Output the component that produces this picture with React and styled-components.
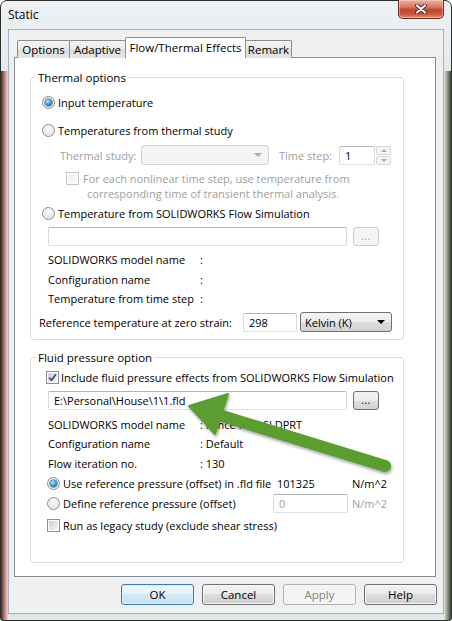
import React from 'react';
import styled, { createGlobalStyle, css } from 'styled-components';

const GlobalStyle = createGlobalStyle`
  html, body { margin: 0; padding: 0; }
  body {
    width: 452px; height: 621px; overflow: hidden; background: #ffffff;
    font-family: "Open Sans", "Liberation Sans", sans-serif; font-size: 11px; color: #000;
  }
  *, *::before, *::after { box-sizing: border-box; }
`;

const Window = styled.div`
  position: relative;
  width: 452px;
  height: 621px;
  display: flex;
  flex-direction: column;
  padding: 0 7px 6px 7px;
  border: 1px solid #2c302b;
  border-radius: 7px 7px 3px 3px;
  background:
    linear-gradient(to right, #4d2624, #9a5552 2px, #c48c88 4px, #e6d8d8 7px) left 70px / 7px calc(100% - 70px) no-repeat,
    linear-gradient(to right, #dfe2dd, #95a08f 3px, #3e4a39 7px) right 70px / 7px calc(100% - 70px) no-repeat,
    linear-gradient(to bottom, #eef1f4, #e6eaee 10%, #e0e5ea);
`;

const TitleBar = styled.div`
  height: 28px;
  flex: none;
  display: flex;
  justify-content: space-between;
  align-items: flex-start;
`;

const Title = styled.div`
  margin-top: 6px;
  font-size: 12px;
  line-height: 16px;
  color: #000;
`;

const CloseBtn = styled.div`
  width: 46px;
  height: 19px;
  margin-top: -1px;
  border: 1px solid #6e2a1c;
  border-top: none;
  border-radius: 0 0 5px 5px;
  background: linear-gradient(#eab2a6 0%, #d9765f 40%, #c4432a 55%, #c95a3f 80%, #e09a7f 100%);
  box-shadow: inset 0 0 0 1px rgba(255, 220, 210, 0.45);
  display: flex;
  align-items: center;
  justify-content: center;
`;

const Client = styled.div`
  flex: 1;
  display: flex;
  flex-direction: column;
  background: #f0f0f0;
  border: 1px solid #a5b0bd;
  padding: 7px 7px 8px 5px;
`;

const TabStrip = styled.div`
  flex: none;
  display: flex;
  align-items: flex-end;
  height: 21px;
  padding-left: 3px;
`;

const Tab = styled.div`
  position: relative;
  z-index: ${p => (p.$active ? 1 : 0)};
  width: ${p => p.$w}px;
  height: ${p => (p.$active ? 21 : 18)}px;
  margin-left: ${p => (p.$first ? 0 : -1)}px;
  display: flex;
  align-items: center;
  justify-content: center;
  padding-bottom: ${p => (p.$active ? 2 : 0)}px;
  border: 1px solid #898c95;
  border-bottom: none;
  border-radius: 2px 2px 0 0;
  background: ${p => (p.$active ? '#ffffff' : 'linear-gradient(#f3f3f3, #ebebeb 50%, #dedede 50%, #e5e5e5)')};
  font-size: 11.5px;
  white-space: nowrap;
`;

const Panel = styled.div`
  flex: 1;
  margin-top: -1px;
  background: #ffffff;
  border: 1px solid #898c95;
  padding: 12px 0 0 15px;
  display: flex;
  flex-direction: column;
`;

const Group = styled.fieldset`
  margin: ${p => p.$mt || 0}px 0 0 0;
  padding: 0;
  width: 374px;
  min-width: 0;
  border: 1px solid #d5dfe5;
  border-radius: 3px;
`;

const Legend = styled.legend`
  margin-left: 5px;
  padding: 0 2px;
  line-height: 15px;
  font-size: 11.5px;
`;

const GroupBody = styled.div`
  display: flex;
  flex-direction: column;
  padding: ${p => p.$pt}px 0 ${p => p.$pb}px 0;
`;

const Row = styled.div`
  display: flex;
  align-items: ${p => (p.$top ? 'flex-start' : 'center')};
  height: ${p => (p.$auto ? 'auto' : `${p.$h || 20}px`)};
  margin-top: ${p => p.$mt || 0}px;
  padding-left: ${p => p.$pl || 0}px;
  gap: ${p => (p.$gap ?? 3)}px;
`;

const Text = styled.span`
  flex: none;
  width: ${p => (p.$w ? `${p.$w}px` : 'auto')};
  padding-left: ${p => p.$pad || 0}px;
  color: ${p => (p.$dim ? '#a0a0a0' : '#000')};
  white-space: nowrap;
`;

const Para = styled.div`
  line-height: 15px;
  color: #a0a0a0;
  padding-left: 4px;
  text-indent: -4px;
  white-space: nowrap;
`;

const Radio = styled.span`
  flex: none;
  width: 13px;
  height: 13px;
  border-radius: 50%;
  border: 1px solid #8b8b8b;
  background: radial-gradient(circle at 50% 40%, #ffffff 0%, #ececec 45%, #c6c6c6 100%);
  box-shadow: inset 0 0 0 1px rgba(255, 255, 255, 0.7);
  display: flex;
  align-items: center;
  justify-content: center;
  ${p => p.$checked && css`
    &::after {
      content: '';
      width: 7px;
      height: 7px;
      border-radius: 50%;
      background: radial-gradient(circle at 40% 35%, #c4ecfc 0%, #3e9fd8 45%, #0c4c82 100%);
      box-shadow: 0 0 0 0.5px #1d4f78;
    }
  `}
`;

const Check = styled.span`
  flex: none;
  width: 13px;
  height: 13px;
  margin-top: ${p => (p.$top ? 1 : 0)}px;
  border: 1px solid ${p => (p.$disabled ? '#c5c5c5' : '#8e8f8f')};
  background: #ffffff;
  padding: 1px;
  display: flex;
`;

const CheckFace = styled.span`
  flex: 1;
  display: flex;
  align-items: center;
  justify-content: center;
  background: ${p => (p.$disabled ? '#f4f4f4' : 'linear-gradient(135deg, #cbcfd5, #f6f6f6)')};
`;

const TextBox = styled.div`
  flex: none;
  width: ${p => p.$w}px;
  height: 19px;
  display: flex;
  align-items: center;
  padding: 0 5px;
  border: 1px solid;
  border-color: #b2b5ba #d5d8dd #dde1e6 #d5d8dd;
  border-radius: 2px;
  background: #ffffff;
  color: ${p => (p.$dim ? '#a0a0a0' : '#000')};
  white-space: nowrap;
`;

const Combo = styled.div`
  flex: none;
  width: ${p => p.$w}px;
  height: 20px;
  margin-left: ${p => p.$ml || 0}px;
  display: flex;
  align-items: center;
  justify-content: space-between;
  padding: 0 6px 0 4px;
  border: 1px solid ${p => (p.$disabled ? '#d3d3d3' : '#707070')};
  border-radius: 3px;
  background: ${p => (p.$disabled ? '#f4f4f4' : 'linear-gradient(#f4f4f4, #ececec 50%, #dedede 50%, #d2d2d2)')};
  color: ${p => (p.$disabled ? '#a0a0a0' : '#000')};
`;

const Caret = styled.span`
  width: 0;
  height: 0;
  border-left: ${p => (p.$small ? 3 : 4)}px solid transparent;
  border-right: ${p => (p.$small ? 3 : 4)}px solid transparent;
  border-${p => (p.$up ? 'bottom' : 'top')}: ${p => (p.$small ? 3 : 4)}px solid ${p => (p.$disabled ? '#ababab' : '#000')};
`;

const SmallBtn = styled.div`
  flex: none;
  width: 26px;
  height: 19px;
  display: flex;
  align-items: center;
  justify-content: center;
  padding-bottom: 2px;
  border: 1px solid ${p => (p.$disabled ? '#c9cccf' : '#707070')};
  border-radius: 3px;
  background: ${p => (p.$disabled ? '#f4f4f4' : 'linear-gradient(#f4f4f4, #ececec 50%, #dedede 50%, #d2d2d2)')};
  color: ${p => (p.$disabled ? '#a0a0a0' : '#000')};
  font-size: 10px;
  letter-spacing: 0.5px;
`;

const Spin = styled.div`
  flex: none;
  display: flex;
  gap: 1px;
`;

const SpinArrows = styled.div`
  display: flex;
  flex-direction: column;
  gap: 1px;
  width: 15px;
  height: 19px;
`;

const SpinBtn = styled.div`
  flex: 1;
  display: flex;
  align-items: center;
  justify-content: center;
  border: 1px solid #d6d6d6;
  border-radius: 2px;
  background: #f4f4f4;
`;

const ButtonRow = styled.div`
  flex: none;
  display: flex;
  justify-content: flex-end;
  gap: 8px;
  height: 21px;
  margin-top: 7px;
  margin-right: -1px;
`;

const Button = styled.button`
  width: 73px;
  height: 21px;
  padding: 0;
  font-family: inherit;
  font-size: 11.5px;
  color: #000;
  border: 1px solid #707070;
  border-radius: 3px;
  background: linear-gradient(#f2f2f2, #ebebeb 50%, #dddddd 50%, #cfcfcf);
  box-shadow: inset 0 0 0 1px #fafafa;
  ${p => p.$default && css`
    border-color: #3c7fb1;
    background: linear-gradient(#f1f8fd, #e3f1fa 50%, #d3e9f6 50%, #c7e2f3);
    box-shadow: inset 0 0 0 1px #d6eefb;
  `}
  ${p => p.$disabled && css`
    border-color: #adb2b5;
    background: #f4f4f4;
    box-shadow: none;
    color: #838383;
  `}
`;

const ArrowLayer = styled.svg`
  position: absolute;
  left: 0;
  top: 0;
  pointer-events: none;
`;

const CheckMark = () => (
  <svg width="9" height="9" viewBox="0 0 9 9">
    <path d="M1.2 4.6 L3.6 7.2 L7.9 1.2" fill="none" stroke="#3d4f91" strokeWidth="1.8" strokeLinejoin="round" />
  </svg>
);

const CheckBox = ({ checked, disabled, top }) => (
  <Check $disabled={disabled} $top={top}>
    <CheckFace $disabled={disabled}>{checked && <CheckMark />}</CheckFace>
  </Check>
);

const Info = ({ label, value, mt }) => (
  <Row $pl={17} $gap={0} $mt={mt}>
    <Text $w={152}>{label}</Text>
    <Text>:{value ? ` ${value}` : ''}</Text>
  </Row>
);

export default function App() {
  return (
    <>
      <GlobalStyle />
      <Window>
        <TitleBar>
          <Title>Static</Title>
          <CloseBtn>
            <svg width="14" height="10" viewBox="0 0 14 10">
              <path d="M3 1.5 L11 8.5 M11 1.5 L3 8.5" stroke="#5a2418" strokeWidth="4" strokeLinecap="round" />
              <path d="M3 1.5 L11 8.5 M11 1.5 L3 8.5" stroke="#ffffff" strokeWidth="2.2" strokeLinecap="round" />
            </svg>
          </CloseBtn>
        </TitleBar>
        <Client>
          <TabStrip>
            <Tab $first $w={53}>Options</Tab>
            <Tab $w={57}>Adaptive</Tab>
            <Tab $active $w={121}>Flow/Thermal Effects</Tab>
            <Tab $w={47}>Remark</Tab>
          </TabStrip>
          <Panel>
            <Group>
              <Legend>Thermal options</Legend>
              <GroupBody $pt={7} $pb={7}>
                <Row $pl={11}>
                  <Radio $checked />
                  <Text>Input temperature</Text>
                </Row>
                <Row $pl={11} $mt={8}>
                  <Radio />
                  <Text>Temperatures from thermal study</Text>
                </Row>
                <Row $pl={29} $mt={5} $gap={0}>
                  <Text $dim $w={81}>Thermal study:</Text>
                  <Combo $disabled $w={128}>
                    <span />
                    <Caret $disabled />
                  </Combo>
                  <Text $dim $w={70} $pad={10}>Time step:</Text>
                  <Spin>
                    <TextBox $w={36}>1</TextBox>
                    <SpinArrows>
                      <SpinBtn><Caret $up $small $disabled /></SpinBtn>
                      <SpinBtn><Caret $small $disabled /></SpinBtn>
                    </SpinArrows>
                  </Spin>
                </Row>
                <Row $pl={35} $mt={6} $auto $top $gap={4}>
                  <CheckBox disabled top />
                  <Para>
                    For each nonlinear time step, use temperature from<br />
                    corresponding time of transient thermal analysis.
                  </Para>
                </Row>
                <Row $pl={11} $mt={2}>
                  <Radio />
                  <Text>Temperature from SOLIDWORKS Flow Simulation</Text>
                </Row>
                <Row $pl={17} $mt={4} $h={19} $gap={6}>
                  <TextBox $w={299} />
                  <SmallBtn $disabled>...</SmallBtn>
                </Row>
                <Info label="SOLIDWORKS model name" mt={3} />
                <Info label="Configuration name" />
                <Info label="Temperature from time step" mt={-1} />
                <Row $pl={8} $mt={4} $gap={0}>
                  <Text $w={204}>Reference temperature at zero strain:</Text>
                  <TextBox $w={54}>298</TextBox>
                  <Combo $w={92} $ml={3}>
                    <span>Kelvin (K)</span>
                    <Caret />
                  </Combo>
                </Row>
              </GroupBody>
            </Group>

            <Group $mt={10}>
              <Legend>Fluid pressure option</Legend>
              <GroupBody $pt={2} $pb={27}>
                <Row $pl={15} $gap={2}>
                  <CheckBox checked />
                  <Text>Include fluid pressure effects from SOLIDWORKS Flow Simulation</Text>
                </Row>
                <Row $pl={17} $mt={4} $h={19} $gap={6}>
                  <TextBox $w={299}>E:\Personal\House\1\1.fld</TextBox>
                  <SmallBtn>...</SmallBtn>
                </Row>
                <Info label="SOLIDWORKS model name" value="Fence new SLDPRT" mt={4} />
                <Info label="Configuration name" value="Default" mt={-1} />
                <Info label="Flow iteration no." value="130" />
                <Row $pl={16} $gap={0}>
                  <Radio $checked />
                  <Text $w={217} $pad={3}>Use reference pressure (offset) in .fld file</Text>
                  <Text $w={75}>101325</Text>
                  <Text>N/m^2</Text>
                </Row>
                <Row $pl={16} $gap={0}>
                  <Radio />
                  <Text $w={213} $pad={3}>Define reference pressure (offset)</Text>
                  <TextBox $w={75} $dim>0</TextBox>
                  <Text $dim $pad={4}>N/m^2</Text>
                </Row>
                <Row $pl={16} $mt={2}>
                  <CheckBox />
                  <Text>Run as legacy study (exclude shear stress)</Text>
                </Row>
              </GroupBody>
            </Group>
          </Panel>
          <ButtonRow>
            <Button $default>OK</Button>
            <Button>Cancel</Button>
            <Button $disabled>Apply</Button>
            <Button>Help</Button>
          </ButtonRow>
        </Client>
        <ArrowLayer width="452" height="621" viewBox="0 0 452 621">
          <defs>
            <filter id="sh" x="-10%" y="-30%" width="120%" height="160%">
              <feDropShadow dx="1" dy="2" stdDeviation="1.5" floodColor="#000" floodOpacity="0.35" />
            </filter>
          </defs>
          <g filter="url(#sh)" fill="#5b9d31" stroke="#5b9d31">
            <line x1="218" y1="414" x2="384" y2="465" strokeWidth="12" strokeLinecap="round" />
            <polygon points="188,405 227,393 214,433" strokeWidth="2" strokeLinejoin="round" />
          </g>
        </ArrowLayer>
      </Window>
    </>
  );
}
